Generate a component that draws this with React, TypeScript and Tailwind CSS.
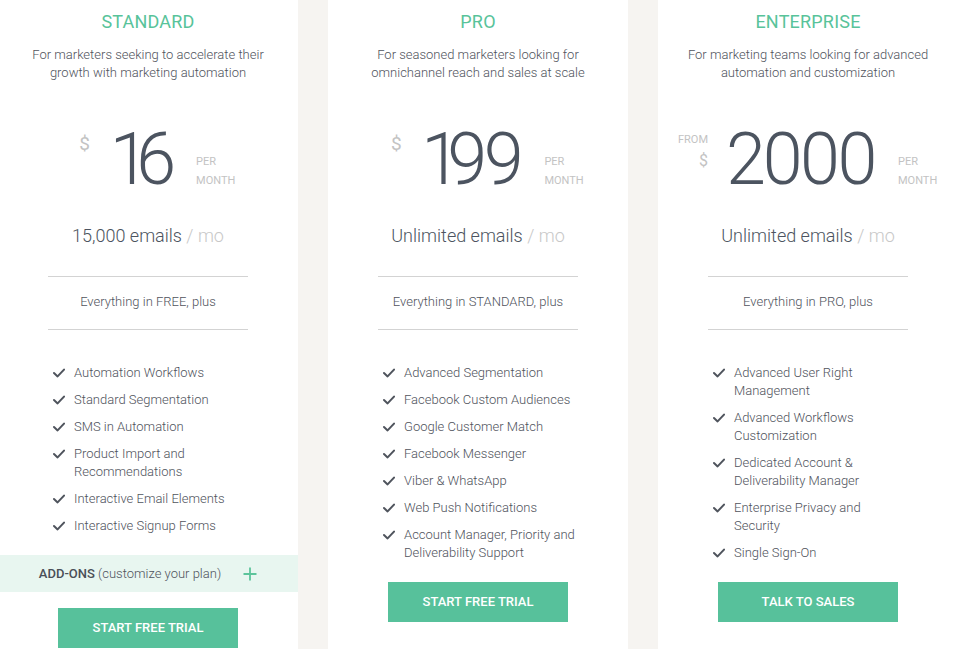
import React from "react";

type Plan = {
  name: string;
  desc: [string, string];
  price: string;
  from?: boolean;
  emails: string;
  everything: string;
  features: string[];
  addons?: boolean;
  cta: string;
};

const plans: Plan[] = [
  {
    name: "STANDARD",
    desc: ["For marketers seeking to accelerate their", "growth with marketing automation"],
    price: "16",
    emails: "15,000 emails",
    everything: "Everything in FREE, plus",
    features: [
      "Automation Workflows",
      "Standard Segmentation",
      "SMS in Automation",
      "Product Import and Recommendations",
      "Interactive Email Elements",
      "Interactive Signup Forms",
    ],
    addons: true,
    cta: "START FREE TRIAL",
  },
  {
    name: "PRO",
    desc: ["For seasoned marketers looking for", "omnichannel reach and sales at scale"],
    price: "199",
    emails: "Unlimited emails",
    everything: "Everything in STANDARD, plus",
    features: [
      "Advanced Segmentation",
      "Facebook Custom Audiences",
      "Google Customer Match",
      "Facebook Messenger",
      "Viber & WhatsApp",
      "Web Push Notifications",
      "Account Manager, Priority and Deliverability Support",
    ],
    cta: "START FREE TRIAL",
  },
  {
    name: "ENTERPRISE",
    desc: ["For marketing teams looking for advanced", "automation and customization"],
    price: "2000",
    from: true,
    emails: "Unlimited emails",
    everything: "Everything in PRO, plus",
    features: [
      "Advanced User Right Management",
      "Advanced Workflows Customization",
      "Dedicated Account & Deliverability Manager",
      "Enterprise Privacy and Security",
      "Single Sign-On",
    ],
    cta: "TALK TO SALES",
  },
];

function Check() {
  return (
    <svg width="12" height="10" viewBox="0 0 12 10" className="shrink-0 mt-[4px]">
      <polyline
        points="1,5 4.6,8.4 11,1.6"
        fill="none"
        stroke="#4f545d"
        strokeWidth="2"
        strokeLinecap="round"
        strokeLinejoin="round"
      />
    </svg>
  );
}

function Price({ value }: { value: string }) {
  return (
    <>
      {value.split("").map((c, i) =>
        c === "1" ? (
          <span key={i} className="pl-[4px] tracking-[-8px]">
            1
          </span>
        ) : (
          <span key={i}>{c}</span>
        )
      )}
    </>
  );
}

function Column({ p }: { p: Plan }) {
  return (
    <div className="w-[300px] shrink-0 bg-white flex flex-col items-center pt-[10px]">
      <div className="text-[18px] leading-[24px] text-[#58c39a] tracking-[0.2px]">{p.name}</div>
      <div className="mt-[12px] text-[13px] leading-[18px] font-light text-[#4f535c] text-center">
        <div>{p.desc[0]}</div>
        <div>{p.desc[1]}</div>
      </div>
      <div className="mt-[42px] flex h-[72px] items-start">
        <div className="w-[30px] flex flex-col items-end">
          {p.from ? (
            <>
              <div className="mt-[9px] text-[11px] leading-[13px] text-[#c3c3c3]">FROM</div>
              <div className="mt-[7px] text-[16px] leading-[16px] text-[#c3c3c3]">$</div>
            </>
          ) : (
            <div className="mt-[10px] text-[19px] leading-[20px] text-[#c3c3c3]">$</div>
          )}
        </div>
        <div className="ml-[18px] text-[72px] leading-[72px] font-light tracking-[-4px] proportional-nums text-[#4c5460]">
          <Price value={p.price} />
        </div>
        <div className="ml-[24px] w-[40px] mt-[28px] text-[11px] leading-[19px] text-[#c3c3c3]">
          <div>PER</div>
          <div>MONTH</div>
        </div>
      </div>
      <div className="mt-[28px] text-[18px] leading-[24px] font-light text-[#4c5460]">
        {p.emails} <span className="text-[#c8c8c8]">/ mo</span>
      </div>
      <div className="mt-[28px] w-[200px] h-px bg-[#d3d3d3]" />
      <div className="pt-[16px] pb-[18px] text-[13px] leading-[18px] font-light text-[#4f535c]">
        {p.everything}
      </div>
      <div className="w-[200px] h-px bg-[#d3d3d3]" />
      <ul className="mt-[34px] self-start ml-[55px] w-[195px] flex flex-col gap-[9px]">
        {p.features.map((f) => (
          <li key={f} className="flex gap-[9px] text-[13px] leading-[18px] font-light text-[#4f535c]">
            <Check />
            <span>{f}</span>
          </li>
        ))}
      </ul>
      {p.addons && (
        <div className="mt-[20px] self-stretch h-[37px] bg-[#e8f6f0] flex items-center justify-center gap-[22px]">
          <div className="text-[13px] text-[#4f535c] font-light">
            <span className="font-medium text-[#4a4f57]">ADD-ONS</span> (customize your plan)
          </div>
          <svg width="14" height="14" viewBox="0 0 14 14">
            <path d="M7 0.5V13.5M0.5 7H13.5" stroke="#5cc49b" strokeWidth="1.8" fill="none" />
          </svg>
        </div>
      )}
      <div
        className={`${p.addons ? "mt-[16px]" : "mt-[20px]"} w-[180px] h-[40px] bg-[#57c19b] flex items-center justify-center text-white text-[13px] font-medium`}
      >
        {p.cta}
      </div>
    </div>
  );
}

export default function App() {
  return (
    <div
      className="w-[953px] h-[649px] overflow-hidden bg-[#f6f4f1]"
      style={{ fontFamily: "Roboto, 'Noto Sans', sans-serif" }}
    >
      <div className="flex gap-[30px] ml-[-2px] h-full">
        {plans.map((p) => (
          <Column key={p.name} p={p} />
        ))}
      </div>
    </div>
  );
}
